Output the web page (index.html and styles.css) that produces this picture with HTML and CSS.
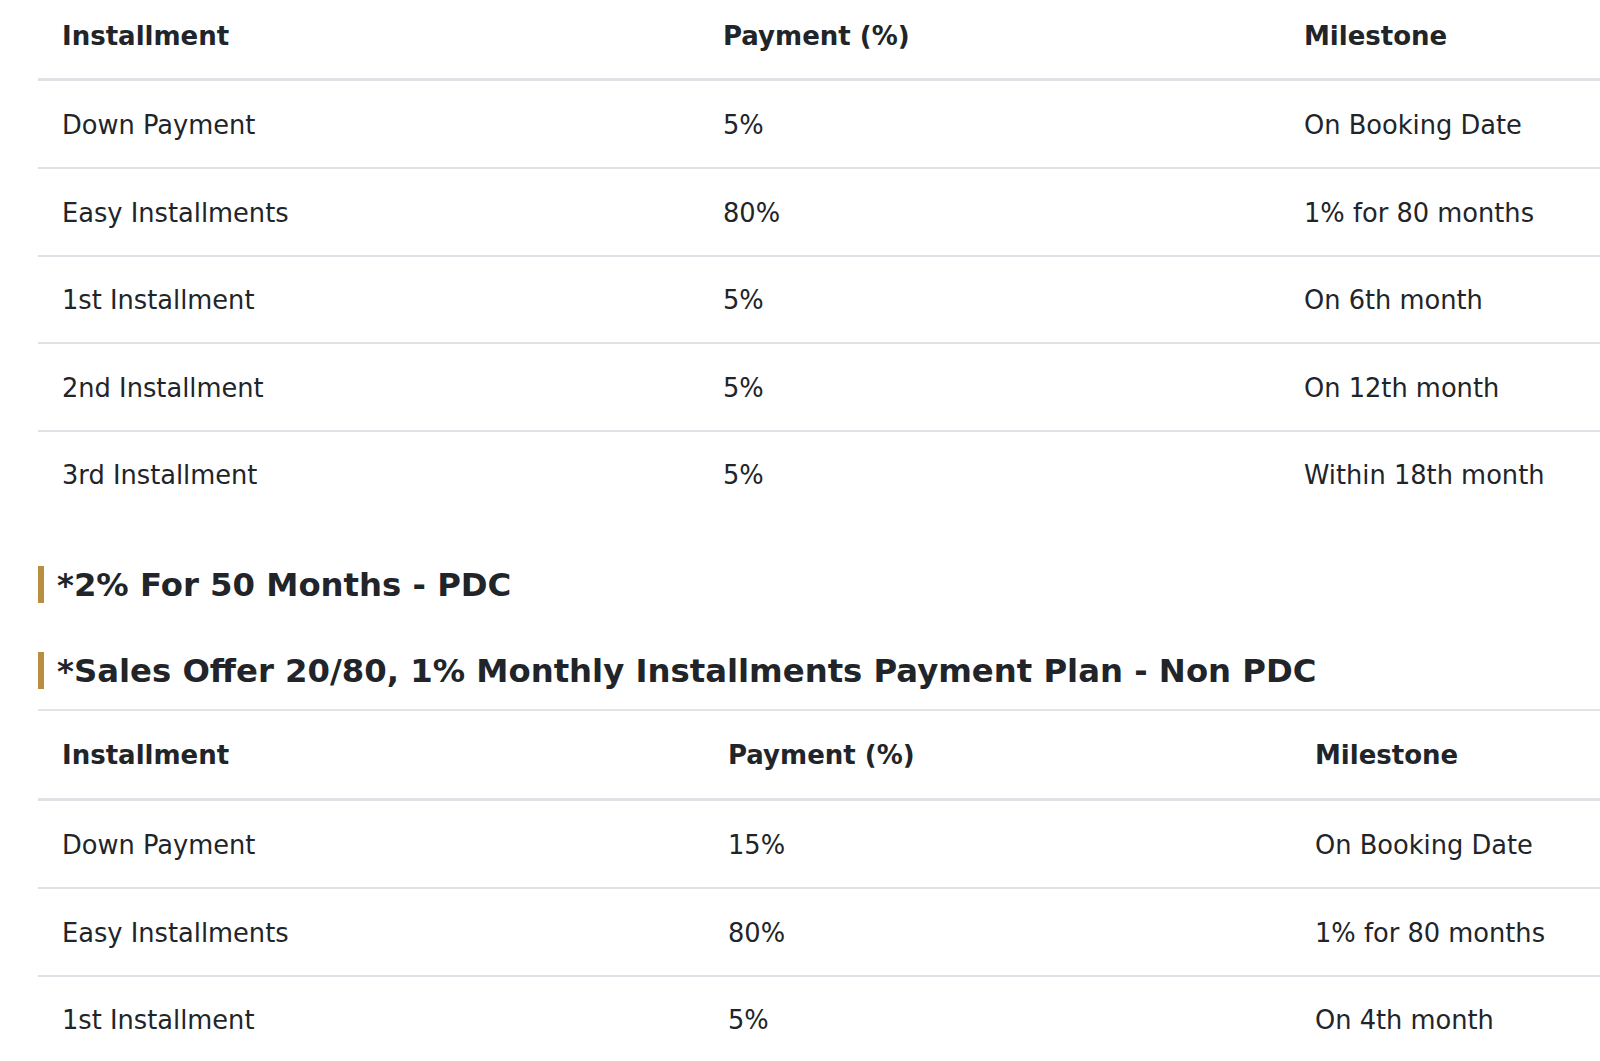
FILE: index.html
```html
<!DOCTYPE html>
<html lang="en">
<head>
<meta charset="utf-8">
<title>Payment Plan</title>
<link rel="stylesheet" href="styles.css">
</head>
<body>
<div class="page">
  <table class="plan plan-a">
    <colgroup><col class="c1"><col class="c2"><col class="c3"></colgroup>
    <thead>
      <tr><th>Installment</th><th>Payment (%)</th><th>Milestone</th></tr>
    </thead>
    <tbody>
      <tr><td>Down Payment</td><td>5%</td><td>On Booking Date</td></tr>
      <tr><td>Easy Installments</td><td>80%</td><td>1% for 80 months</td></tr>
      <tr><td>1st Installment</td><td>5%</td><td>On 6th month</td></tr>
      <tr><td>2nd Installment</td><td>5%</td><td>On 12th month</td></tr>
      <tr><td>3rd Installment</td><td>5%</td><td>Within 18th month</td></tr>
    </tbody>
  </table>

  <h3 class="plan-title first">*2% For 50 Months - PDC</h3>
  <h3 class="plan-title">*Sales Offer 20/80, 1% Monthly Installments Payment Plan - Non PDC</h3>

  <table class="plan plan-b">
    <colgroup><col class="c1"><col class="c2"><col class="c3"></colgroup>
    <thead>
      <tr><th>Installment</th><th>Payment (%)</th><th>Milestone</th></tr>
    </thead>
    <tbody>
      <tr><td>Down Payment</td><td>15%</td><td>On Booking Date</td></tr>
      <tr><td>Easy Installments</td><td>80%</td><td>1% for 80 months</td></tr>
      <tr><td>1st Installment</td><td>5%</td><td>On 4th month</td></tr>
      <tr><td>2nd Installment</td><td>5%</td><td>On 8th month</td></tr>
    </tbody>
  </table>
</div>
</body>
</html>
```

FILE: styles.css
```css
html, body {
  margin: 0;
  padding: 0;
  overflow: hidden;
  background: #ffffff;
}

body {
  font-family: "DejaVu Sans", Verdana, sans-serif;
  color: #212529;
}

.page {
  margin-top: -10.5px;
  padding-left: 38px;
  width: 1800px;
}

.plan {
  border-collapse: separate;
  border-spacing: 0;
  table-layout: fixed;
  width: 1720px;
}

.plan-a .c1 { width: 661px; }
.plan-a .c2 { width: 581px; }
.plan-b .c1 { width: 666px; }
.plan-b .c2 { width: 587px; }

.plan th,
.plan td {
  text-align: left;
  vertical-align: top;
  line-height: 38.4px;
  padding-left: 24px;
  padding-right: 22px;
  white-space: nowrap;
}

.plan th {
  font-size: 26px;
  font-weight: bold;
  padding-top: 25px;
  padding-bottom: 23px;
  border-top: 2px solid #e1e4e8;
  border-bottom: 3px solid #dee2e6;
}

.plan td {
  font-size: 25.7px;
  font-weight: normal;
  padding-top: 24.5px;
  padding-bottom: 22.6px;
  border-top: 2px solid #dee2e6;
}

.plan tbody tr:first-child td {
  border-top: 0;
  padding-top: 25.5px;
}

.plan-title {
  margin: 49px 0 20px;
  font-size: 32.3px;
  font-weight: bold;
  line-height: 36px;
  padding: 1px 0 0 13px;
  border-left: 6px solid #b78f3f;
  color: #212529;
}

.plan-title.first {
  margin-top: 49px;
}
```
